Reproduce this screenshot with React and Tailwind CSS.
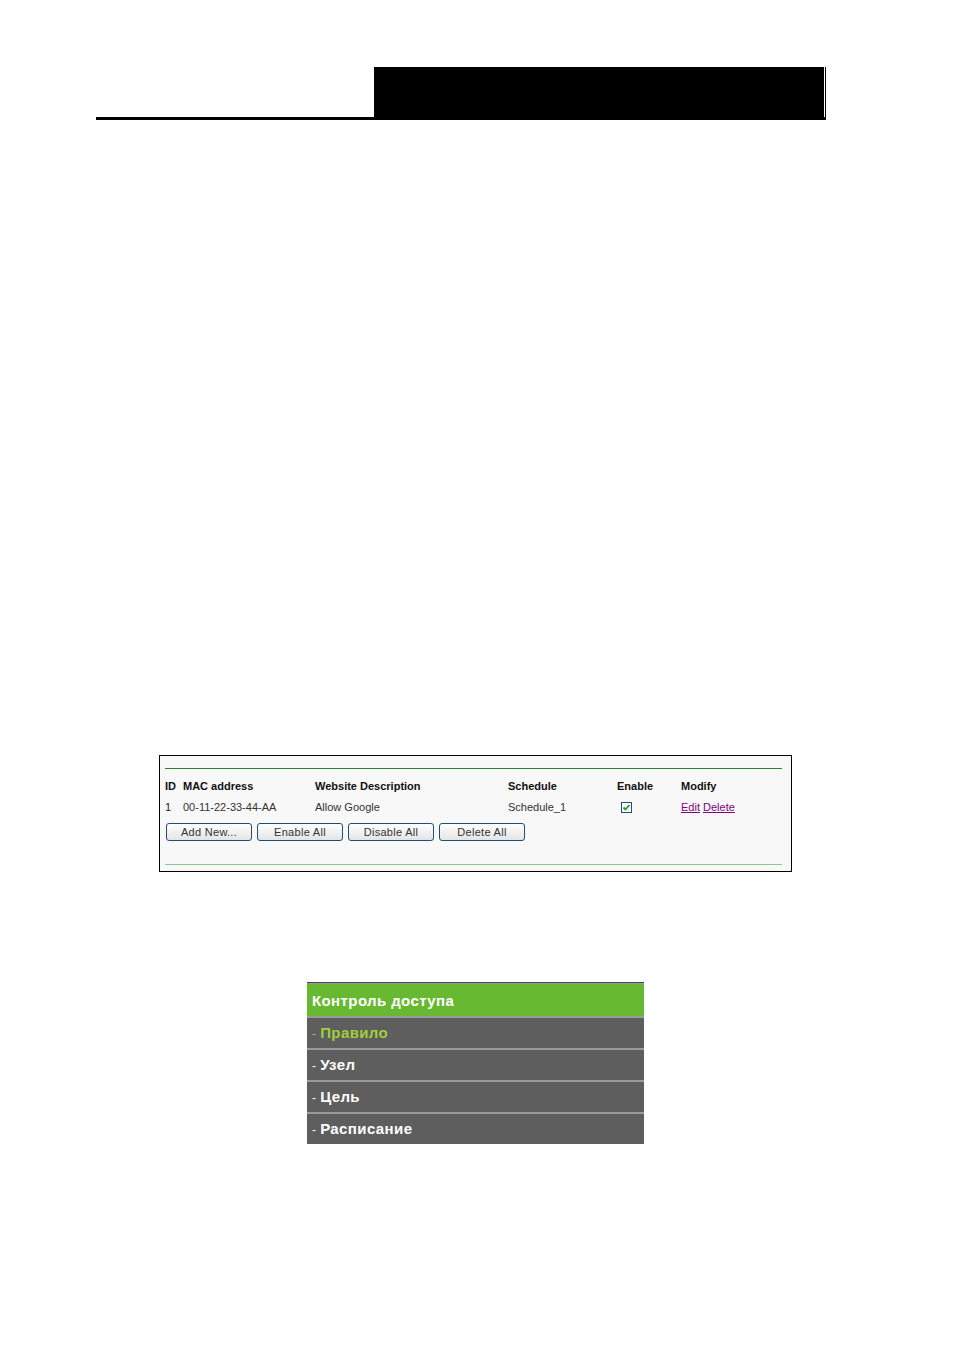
const rows = [
  { id: "1", mac: "00-11-22-33-44-AA", desc: "Allow Google", schedule: "Schedule_1" },
];

const menu = [
  { label: "Правило", active: true },
  { label: "Узел" },
  { label: "Цель" },
  { label: "Расписание" },
];

const Btn = ({ children }) => (
  <button className="h-[18px] w-[86px] rounded-[3px] border border-[#1c4f7a] bg-gradient-to-b from-white to-[#e4e4e4] text-[11px] leading-none tracking-[0.3px] text-[#333]">
    {children}
  </button>
);

export default function App() {
  return (
    <div className="w-[954px] min-h-[1350px] bg-white font-['Liberation_Sans',Arial,sans-serif]">
      {/* page header */}
      <div className="pt-[67px] pl-[96px]">
        <div className="flex w-[730px] justify-end border-b-[3px] border-black">
          <div className="h-[50px] w-[450px] bg-black" />
          <div className="w-px bg-white" />
          <div className="w-px bg-black" />
        </div>
      </div>

      {/* access control table */}
      <div className="ml-[159px] mt-[635px] h-[117px] w-[633px] border border-black bg-[#f8f8f8] pl-[5px] pr-[9px] pt-[12px]">
        <div className="h-px bg-[#2f7d3e]" />
        <div className="mt-[11px] text-[11px] text-[#111]">
          <div className="flex h-[13px] items-center font-bold">
            <span className="w-[18px]">ID</span>
            <span className="w-[132px]">MAC address</span>
            <span className="w-[193px]">Website Description</span>
            <span className="w-[109px]">Schedule</span>
            <span className="w-[64px]">Enable</span>
            <span>Modify</span>
          </div>
          {rows.map((r) => (
            <div key={r.id} className="mt-[8px] flex h-[13px] items-center text-[#333]">
              <span className="w-[18px] text-[#222]">{r.id}</span>
              <span className="w-[132px]">{r.mac}</span>
              <span className="w-[193px]">{r.desc}</span>
              <span className="w-[109px]">{r.schedule}</span>
              <span className="w-[64px] pl-[4px]">
                <span className="flex h-[11px] w-[11px] items-center justify-center border border-[#1c5180] bg-white">
                  <svg width="9" height="9" viewBox="0 0 9 9">
                    <path d="M1.5 4.5 L3.5 6.5 L7.5 2" stroke="#21a121" strokeWidth="1.8" fill="none" />
                  </svg>
                </span>
              </span>
              <span className="text-[#800080]">
                <a className="underline">Edit</a> <a className="underline">Delete</a>
              </span>
            </div>
          ))}
          <div className="mt-[9px] flex gap-[5px] pl-px">
            <Btn>Add New...</Btn>
            <Btn>Enable All</Btn>
            <Btn>Disable All</Btn>
            <Btn>Delete All</Btn>
          </div>
        </div>
        <div className="mt-[23px] h-px bg-[#8fc59c]" />
      </div>

      {/* menu */}
      <div className="ml-[307px] mt-[110px] w-[337px] font-bold">
        <div className="h-px bg-[#444]" />
        <div className="h-px bg-[#999]" />
        <div className="flex h-[32px] items-center bg-[#67b932] pl-[5px] pt-[2px] text-[15px] tracking-[0.4px] text-white">
          Контроль доступа
        </div>
        {menu.map((m) => (
          <div key={m.label}>
            <div className="h-[2px] bg-[#9a9a9a]" />
            <div className="flex h-[30px] items-center bg-[#5e5e5e] pl-[5px] pt-px text-[15px] tracking-[0.4px]">
              <span className={m.active ? "text-[#9fcf3c]" : "text-white"}>
                <span className="font-normal text-[12px]">- </span>
                {m.label}
              </span>
            </div>
          </div>
        ))}
      </div>
    </div>
  );
}
